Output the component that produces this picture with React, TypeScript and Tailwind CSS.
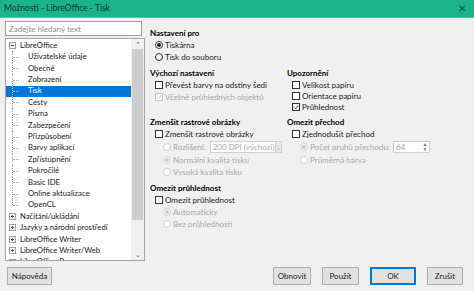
import React from "react";

type Opt = { label: string; kind: "cb" | "radio"; on?: boolean; off?: boolean; sub?: boolean };

function Box({ on, off }: { on?: boolean; off?: boolean }) {
  return (
    <span
      className={`flex h-[8px] w-[8px] shrink-0 items-center justify-center border bg-white ${
        off ? "border-[#c4c4c4]" : "border-[#333]"
      }`}
    >
      {on && (
        <svg width="6" height="6" viewBox="0 0 6 6">
          <path d="M0.8 3.2 L2.4 4.8 L5.3 1.2" fill="none" stroke={off ? "#c4c4c4" : "#555"} strokeWidth="1" />
        </svg>
      )}
    </span>
  );
}

function Radio({ on, off }: { on?: boolean; off?: boolean }) {
  return (
    <span
      className={`flex h-[8px] w-[8px] shrink-0 items-center justify-center rounded-full border bg-white ${
        off ? "border-[#d0d0d0]" : "border-[#333]"
      }`}
    >
      {on && <span className={`h-[4px] w-[4px] rounded-full ${off ? "bg-[#c8c8c8]" : "bg-[#222]"}`} />}
    </span>
  );
}

function Row({ o }: { o: Opt }) {
  return (
    <div
      className={`flex h-[12px] items-center gap-[2px] whitespace-nowrap ${o.sub ? "pl-[13px]" : "pl-[5px]"} ${
        o.off ? "text-[#a8a8a8]" : ""
      }`}
    >
      {o.kind === "cb" ? <Box on={o.on} off={o.off} /> : <Radio on={o.on} off={o.off} />}
      <span>{o.label}</span>
    </div>
  );
}

function Heading({ children }: { children: React.ReactNode }) {
  return <div className="flex h-[13px] items-center font-bold text-black">{children}</div>;
}

const tree = [
  "Uživatelské údaje",
  "Obecné",
  "Zobrazení",
  "Tisk",
  "Cesty",
  "Písma",
  "Zabezpečení",
  "Přizpůsobení",
  "Barvy aplikací",
  "Zpřístupnění",
  "Pokročilé",
  "Basic IDE",
  "Online aktualizace",
  "OpenCL",
];

const topLevel = ["Načítání/ukládání", "Jazyky a národní prostředí", "LibreOffice Writer", "LibreOffice Writer/Web", "LibreOffice Base"];

function Expander({ open }: { open?: boolean }) {
  return (
    <span className="relative flex h-[7px] w-[7px] shrink-0 items-center justify-center border border-[#a0a0a0] bg-white">
      <span className="h-px w-[3px] bg-[#555]" />
      {!open && <span className="absolute h-[3px] w-px bg-[#555]" />}
    </span>
  );
}

function Btn({ label, w, ok }: { label: string; w: string; ok?: boolean }) {
  return (
    <div
      className={`flex h-[18px] items-center justify-center bg-[#e1e1e1] ${w} ${
        ok ? "border border-[#0078d7] shadow-[inset_0_0_0_1px_#0078d7]" : "border border-[#adadad]"
      }`}
    >
      {label}
    </div>
  );
}

export default function App() {
  return (
    <div className="flex h-[291px] w-[474px] flex-col overflow-hidden bg-[#f0f0f0] font-['Lato',sans-serif] text-[8px] text-[#1a1a1a]">
      <div className="flex h-[18px] shrink-0 items-center justify-between border-b border-[#49c9a6] bg-[#1ab38c] pl-[4px] pr-[8px] text-[8.5px] text-[#10352b]">
        <span>Možnosti - LibreOffice - Tisk</span>
        <span className="text-[10px] text-[#134d3d]">✕</span>
      </div>

      <div className="flex h-[243px] shrink-0">
        {/* left: search + tree */}
        <div className="flex w-[146px] shrink-0 flex-col pl-[5px] pt-[3px]">
          <div className="flex h-[15px] w-[137px] items-center border border-[#a0a0a0] bg-white pl-[3px] text-[#8c8c8c]">
            Zadejte hledaný text
          </div>
          <div className="mt-[2px] flex h-[223px] w-[140px] border border-[#a5a5a5] bg-white text-[7.7px]">
            <div className="flex flex-1 flex-col overflow-hidden pt-[1px]">
              <div className="flex h-[11.4px] shrink-0 items-center gap-[4px] pl-[3px]">
                <Expander open />
                <span>LibreOffice</span>
              </div>
              {tree.map((t, i) => (
                <div
                  key={t}
                  className={`relative flex h-[11.4px] shrink-0 items-center pl-[22px] ${t === "Tisk" ? "bg-[#0078d7] text-white" : ""}`}
                >
                  <span
                    className={`absolute left-[6px] top-0 w-0 border-l border-dotted ${
                      t === "Tisk" ? "border-[#9cc3ea]" : "border-[#a8a8a8]"
                    } ${i === tree.length - 1 ? "h-[6px]" : "h-full"}`}
                  />
                  <span
                    className={`absolute left-[7px] top-[5.5px] w-[6px] border-t border-dotted ${
                      t === "Tisk" ? "border-[#9cc3ea]" : "border-[#a8a8a8]"
                    }`}
                  />
                  {t}
                </div>
              ))}
              {topLevel.map((t) => (
                <div key={t} className="flex h-[11.4px] shrink-0 items-center gap-[4px] pl-[3px]">
                  <Expander />
                  <span>{t}</span>
                </div>
              ))}
            </div>
            <div className="flex w-[13px] shrink-0 flex-col items-center bg-[#f0f0f0]">
              <div className="flex h-[10px] items-center text-[7px] text-[#606060]">⌃</div>
              <div className="h-[171px] w-[11px] bg-[#cdcdcd]" />
              <div className="flex-1" />
              <div className="flex h-[12px] items-center text-[7px] text-[#606060]">⌄</div>
            </div>
          </div>
        </div>

        {/* right: options */}
        <div className="flex flex-1 flex-col pl-[4px] pt-[8px]">
          <Heading>Nastavení pro</Heading>
          <Row o={{ label: "Tiskárna", kind: "radio", on: true }} />
          <Row o={{ label: "Tisk do souboru", kind: "radio" }} />

          <div className="mt-[3px] grid grid-cols-[137px_1fr]">
            <div className="flex flex-col">
              <Heading>Výchozí nastavení</Heading>
              <Row o={{ label: "Převést barvy na odstíny šedi", kind: "cb" }} />
              <Row o={{ label: "Včetně průhledných objektů", kind: "cb", on: true, off: true }} />
            </div>
            <div className="flex flex-col">
              <Heading>Upozornění</Heading>
              <div className="flex flex-col [&>div]:h-[11px]">
                <Row o={{ label: "Velikost papíru", kind: "cb" }} />
                <Row o={{ label: "Orientace papíru", kind: "cb" }} />
                <Row o={{ label: "Průhlednost", kind: "cb", on: true }} />
              </div>
            </div>

            <div className="mt-[3px] flex flex-col">
              <Heading>Zmenšit rastrové obrázky</Heading>
              <Row o={{ label: "Zmenšit rastrové obrázky", kind: "cb" }} />
              <div className="flex h-[14px] items-center gap-[2px] whitespace-nowrap pl-[13px] text-[#a8a8a8]">
                <Radio off />
                <span>Rozlišení:</span>
                <div className="ml-[2px] flex h-[12px] w-[72px] shrink-0 items-center border border-[#cfcfcf] bg-white">
                  <span className="flex-1 pl-[2px]">200 DPI (výchozí)</span>
                  <span className="flex h-full w-[9px] items-center justify-center border-l border-[#cfcfcf] bg-[#e6e6e6] text-[6px]">
                    ⌄
                  </span>
                </div>
              </div>
              <Row o={{ label: "Normální kvalita tisku", kind: "radio", on: true, off: true, sub: true }} />
              <Row o={{ label: "Vysoká kvalita tisku", kind: "radio", off: true, sub: true }} />

              <div className="mt-[3px]">
                <Heading>Omezit průhlednost</Heading>
              </div>
              <Row o={{ label: "Omezit průhlednost", kind: "cb" }} />
              <Row o={{ label: "Automaticky", kind: "radio", on: true, off: true, sub: true }} />
              <Row o={{ label: "Bez průhlednosti", kind: "radio", off: true, sub: true }} />
            </div>
            <div className="mt-[3px] flex flex-col">
              <Heading>Omezit přechod</Heading>
              <Row o={{ label: "Zjednodušit přechod", kind: "cb" }} />
              <div className="flex h-[14px] items-center gap-[2px] whitespace-nowrap pl-[13px] text-[#a8a8a8]">
                <Radio on off />
                <span>Počet pruhů přechodu:</span>
                <div className="ml-[1px] flex h-[12px] w-[37px] shrink-0 items-center border border-[#cfcfcf] bg-white">
                  <span className="flex-1 pl-[2px]">64</span>
                  <span className="flex h-full w-[8px] flex-col items-center justify-center text-[5px] leading-[5px] text-[#777]">
                    <span>▲</span>
                    <span>▼</span>
                  </span>
                </div>
              </div>
              <Row o={{ label: "Průměrná barva", kind: "radio", off: true, sub: true }} />
            </div>
          </div>
        </div>
      </div>

      <div className="flex h-[30px] items-start pl-[7px] pr-[11px] pt-[6px] text-[#1a1a1a]">
        <Btn label="Nápověda" w="w-[45px]" />
        <div className="flex-1" />
        <div className="flex gap-[11px]">
          <Btn label="Obnovit" w="w-[38px]" />
          <Btn label="Použít" w="w-[37px]" />
          <Btn label="OK" w="w-[46px]" ok />
          <Btn label="Zrušit" w="w-[36px]" />
        </div>
      </div>
    </div>
  );
}
